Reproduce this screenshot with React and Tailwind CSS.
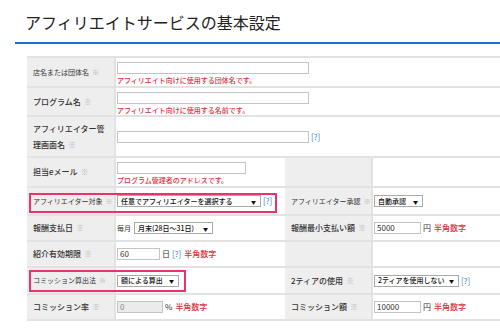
import React from 'react';

const jp = { fontFamily: '"Noto Sans CJK JP", "Noto Sans", sans-serif' };

const Mark = () => <span className="text-[#b5b5b5] ml-[3px]">※</span>;

const Help = () => <span className="text-[#3d7fc0] text-[8px] ml-[2px] align-middle">[?]</span>;

const Note = ({ children }) => (
  <span className="text-[#d8313b] text-[8px] ml-[3px] align-middle font-medium">{children}</span>
);

const TextBox = ({ width, value = '', disabled = false }) => (
  <div
    className={`inline-flex items-center h-[12px] border border-[#c4c4c4] px-[2px] text-[8px] leading-none align-middle ${
      disabled ? 'bg-[#ebebeb] text-[#888]' : 'bg-white text-[#333]'
    }`}
    style={{ width }}
  >
    {value}
  </div>
);

const Select = ({ width, label }) => (
  <div
    className="inline-flex items-center justify-between h-[12px] border border-[#a9a9a9] bg-white pl-[3px] pr-[4px] text-[7px] font-medium leading-none text-[#111] align-middle whitespace-nowrap"
    style={{ width }}
  >
    <span>{label}</span>
    <span className="text-[5px]">▼</span>
  </div>
);

const Label = ({ children, small = false, h }) => (
  <td
    className={`bg-[#eeeeee] border-b-2 border-[#e2e2e2] pl-[6px] pr-[2px] align-middle text-[#333] whitespace-nowrap ${
      small ? 'text-[7px]' : 'text-[8px] font-medium'
    }`}
    style={{ height: h }}
  >
    {children}
  </td>
);

const Value = ({ children, colSpan, top = false }) => (
  <td
    colSpan={colSpan}
    className={`bg-white border-b-2 border-l-2 border-[#e2e2e2] pl-[1px] text-[8px] text-[#333] whitespace-nowrap ${
      top ? 'align-top pt-[3px]' : 'align-middle'
    }`}
  >
    {children}
  </td>
);

const App = () => {
  return (
    <div className="w-[500px] h-[330px] bg-white overflow-hidden relative" style={jp}>
      <div className="pl-[25px] pt-[12px] h-[42px] text-[16px] leading-[20px] text-[#222]">
        アフィリエイトサービスの基本設定
      </div>
      <div className="ml-[15px] h-[2px] bg-[#1c72c6]" />

      <div className="ml-[27px] mt-[12px] w-[520px]">
        <table className="w-[520px] border-collapse table-fixed border-t-2 border-[#e2e2e2]">
          <colgroup>
            <col className="w-[88px]" />
            <col className="w-[170px]" />
            <col className="w-[87px]" />
            <col />
          </colgroup>
          <tbody>
            <tr>
              <Label small h={30}>
                店名または団体名<Mark />
              </Label>
              <Value colSpan={3} top>
                <TextBox width={192} />
                <div className="text-[#d8313b] text-[7px] leading-[10px] mt-[1px] font-medium">
                  アフィリエイト向けに使用する団体名です。
                </div>
              </Value>
            </tr>
            <tr>
              <Label h={29}>
                プログラム名<Mark />
              </Label>
              <Value colSpan={3} top>
                <TextBox width={192} />
                <div className="text-[#d8313b] text-[7px] leading-[10px] mt-[1px] font-medium">
                  アフィリエイト向けに使用する名前です。
                </div>
              </Value>
            </tr>
            <tr>
              <Label h={41}>
                <div className="leading-[16px]">
                  アフィリエイター管
                  <br />
                  理画面名<Mark />
                </div>
              </Label>
              <Value colSpan={3}>
                <TextBox width={192} />
                <Help />
              </Value>
            </tr>
            <tr>
              <Label h={30}>
                担当eメール<Mark />
              </Label>
              <Value top>
                <TextBox width={129} />
                <div className="text-[#d8313b] text-[7px] leading-[10px] mt-[1px] font-medium">
                  プログラム管理者のアドレスです。
                </div>
              </Value>
              <Label> </Label>
              <Value> </Value>
            </tr>
            <tr>
              <Label small h={28}>
                アフィリエイター対象<Mark />
              </Label>
              <Value>
                <Select width={144} label="任意でアフィリエイターを選択する" />
                <Help />
              </Value>
              <Label small>
                アフィリエイター承認<Mark />
              </Label>
              <Value>
                <Select width={49} label="自動承認" />
              </Value>
            </tr>
            <tr>
              <Label h={26}>
                報酬支払日<Mark />
              </Label>
              <Value>
                <span className="text-[7px] mr-[3px] align-middle">毎月</span>
                <Select width={79} label="月末(28日～31日)" />
              </Value>
              <Label>
                報酬最小支払い額<Mark />
              </Label>
              <Value>
                <TextBox width={47} value="5000" />
                <span className="ml-[2px] align-middle">円</span>
                <Note>半角数字</Note>
              </Value>
            </tr>
            <tr>
              <Label h={26}>
                紹介有効期限<Mark />
              </Label>
              <Value>
                <TextBox width={43} value="60" />
                <span className="ml-[2px] align-middle">日</span>
                <Help />
                <Note>半角数字</Note>
              </Value>
              <Label> </Label>
              <Value> </Value>
            </tr>
            <tr>
              <Label small h={27}>
                コミッション算出法<Mark />
              </Label>
              <Value>
                <Select width={62} label="額による算出" />
              </Value>
              <Label>
                2ティアの使用<Mark />
              </Label>
              <Value>
                <Select width={85} label="2ティアを使用しない" />
                <Help />
              </Value>
            </tr>
            <tr>
              <Label h={26}>
                コミッション率<Mark />
              </Label>
              <Value>
                <TextBox width={46} value="0" disabled />
                <span className="ml-[2px] align-middle">%</span>
                <Note>半角数字</Note>
              </Value>
              <Label>
                コミッション額<Mark />
              </Label>
              <Value>
                <TextBox width={47} value="10000" />
                <span className="ml-[2px] align-middle">円</span>
                <Note>半角数字</Note>
              </Value>
            </tr>
          </tbody>
        </table>
      </div>

      <div className="absolute left-[29px] top-[193px] w-[248px] h-[20px] border-2 border-[#e8336b]" />
      <div className="absolute left-[29px] top-[270px] w-[157px] h-[22px] border-2 border-[#e8336b]" />
    </div>
  );
};

export default App;
